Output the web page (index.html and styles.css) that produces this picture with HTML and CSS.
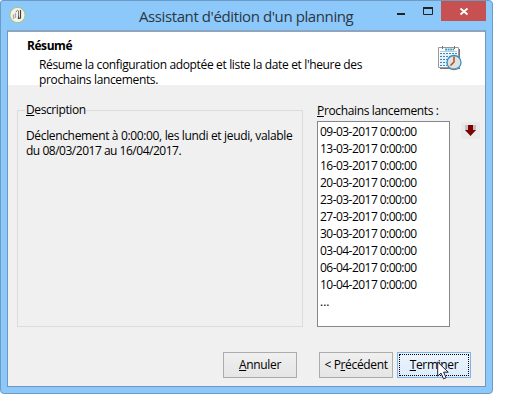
FILE: index.html
```html
<!DOCTYPE html>
<html lang="fr">
<head>
<meta charset="utf-8">
<title>Assistant d'édition d'un planning</title>
<link rel="stylesheet" href="styles.css">
</head>
<body>
<div class="window">
  <div class="titlebar">
    <svg class="app-icon" width="18" height="18" viewBox="0 0 18 18">
      <circle cx="8.500" cy="9" r="7.6" fill="#f4f4ee" stroke="#a9c46a" stroke-width="1"/>
      <path d="M4.500 13V8.500M6.500 12V7" stroke="#aaa9a0" stroke-width="1.3"/>
      <path d="M7 6c1-2 2-2 2.500-1v6" stroke="#77776f" fill="none"/>
      <path d="M11.500 4v8l-2 .5v-2" stroke="#44443f" stroke-width="1.2" fill="none"/>
    </svg>
    <h1 class="title">Assistant d'édition d'un planning</h1>
    <svg class="sys" width="60" height="20" viewBox="0 0 60 20">
      <path d="M17 13h8" stroke="#222" stroke-width="2"/>
      <path d="M43.500 6.500h9v7h-9z" stroke="#222" fill="none"/><path d="M43 7h10" stroke="#222" stroke-width="2"/>
    </svg>
    <div class="close"><svg width="45" height="20" viewBox="0 0 45 20"><path d="M19.5 7.500l7 6M26.5 7.500l-7 6" stroke="#fff" stroke-width="1.8"/></svg></div>
  </div>
  <main class="client">
    <header class="banner">
      <div class="banner-text">
        <h2>Résumé</h2>
        <p>Résume la configuration adoptée et liste la date et l'heure des<br>prochains lancements.</p>
      </div>
      <svg class="calendar" width="25" height="25" viewBox="0 0 25 25">
        <path d="M.5 1.5h20v20H.5z" fill="#fbfcfc" stroke="#999"/>
        <path d="M2 22.5h20M21.5 3v18" stroke="#777"/>
        <path d="M4.500 0v3M16.500 0v3" stroke="#777"/>
        <path d="M7 3.500h9" stroke="#429bc3" stroke-width="2" stroke-dasharray="2 .6"/>
        <path d="M2 5.500h17" stroke="#b8cbd7"/>
        <path d="M2 7.500h17M2 10.500h17M2 13.500h15M2 16.500h8M2 19.500h7" stroke="#3c86c4" stroke-dasharray="2 1"/>
        <path d="M2 9h17M2 12h17M2 15h9M2 18h7" stroke="#c4ddf2" stroke-width=".8"/>
        <circle cx="16" cy="16.500" r="7" fill="#e0e1e3" stroke="#3192c1" stroke-width="1.300"/>
        <path d="M11 21a7 7 0 0 0 9.500 0" fill="none" stroke="#8d9298"/>
        <path d="M16 10.500V16l-3.500 3.500" fill="none" stroke="#b84c19" stroke-width="1.500"/>
      </svg>
    </header>
    <div class="content">
      <fieldset class="description">
        <legend><u>D</u>escription</legend>
        <p>Déclenchement à 0:00:00, les lundi et jeudi, valable<br><span class="dates">du 08/03/2017 au 16/04/2017.</span></p>
      </fieldset>
      <section class="launches">
        <h3><u>P</u>rochains lancements :</h3>
        <ul>
          <li>09-03-2017 0:00:00</li>
          <li>13-03-2017 0:00:00</li>
          <li>16-03-2017 0:00:00</li>
          <li>20-03-2017 0:00:00</li>
          <li>23-03-2017 0:00:00</li>
          <li>27-03-2017 0:00:00</li>
          <li>30-03-2017 0:00:00</li>
          <li>03-04-2017 0:00:00</li>
          <li>06-04-2017 0:00:00</li>
          <li>10-04-2017 0:00:00</li>
          <li class="ellipsis">...</li>
        </ul>
      </section>
      <div class="more"><svg width="19" height="17" viewBox="0 0 19 17"><path d="M4 3h11v6H4z" fill="#c2c2c2"/><path d="M7 3h5v5h3l-5.500 6L4 8h3z" fill="#800000"/></svg></div>
    </div>
    <footer class="actions">
      <div class="btn cancel"><span><u>A</u>nnuler</span></div>
      <div class="btn prev"><span>&lt; P<u>r</u>écédent</span></div>
      <div class="btn finish"><span><u>T</u>erminer</span></div>
    </footer>
  </main>
  <svg class="cursor" width="12" height="19" viewBox="0 0 12 19"><path d="M.7 1v14.200l3.300-3.100 2.500 5.700 2.600-1.100-2.500-5.500h4.600z" fill="#fff" stroke="#1b1f38"/></svg>
</div>
</body>
</html>
```
FILE: styles.css
```css
* { box-sizing: border-box; margin: 0; padding: 0; }
body { background: #fff; font: 12px/15px "Open Sans", "Noto Sans", sans-serif; letter-spacing: -.35px; color: #000; }
u { text-decoration: underline; text-underline-offset: 1px; text-decoration-thickness: 1px; text-decoration-skip-ink: none; }
h1, h2, h3 { font-size: inherit; font-weight: 400; }
svg { display: block; }
.window { position: relative; width: 493px; height: 394px; background: #8dc8fa; border: 1px solid #6c9bc5; border-radius: 3px 4px 4px 4px; padding: 0 6px 6px; }
.titlebar { display: flex; height: 29px; align-items: flex-start; }
.app-icon { margin: 5px 0 0 2px; flex: none; }
.title { margin-left: 112px; width: 215px; padding-top: 4px; font-size: 15px; line-height: 22px; letter-spacing: -.4px; white-space: nowrap; color: #293743; flex: none; }
.sys { width: 60px; margin: 0 -22px 0 26px; flex: none; }
.close { margin-left: auto; width: 45px; height: 20px; background: #c75050; flex: none; }
.client { width: 479px; height: 357px; background: #f0f0f0; border: 1px solid #7198bb; border-top: 2px solid #8ca4bd; }
.banner { display: flex; justify-content: space-between; height: 53px; background: #fff; padding: 0 22px 0 19px; }
.banner-text { height: 53px; }
.banner h2 { margin-top: 6px; font-weight: 700; letter-spacing: -.45px; line-height: 16px; }
.banner p { margin: 3px 0 0 12px; white-space: nowrap; }
.calendar { margin-top: 14px; flex: none; }
.content { display: flex; height: 254px; padding: 17px 0 0 9px; }
.description { flex: none; min-width: 0; width: 286px; height: 225px; border: 1px solid #dcdcdc; padding: 10px 8px; }
.description legend { margin-left: -1px; padding: 0 0 0 1px; line-height: 16px; letter-spacing: -.4px; }
.description p { white-space: nowrap; }
.dates { letter-spacing: -.48px; }
.launches { flex: none; margin-left: 14px; width: 133px; }
.launches h3 { height: 19px; line-height: 18px; white-space: nowrap; }
.launches ul { list-style: none; height: 206px; border: 1px solid #828790; background: #fff; padding: 1px 2px; }
.launches li { height: 17px; line-height: 17px; letter-spacing: -.54px; white-space: nowrap; }
.launches .ellipsis { letter-spacing: 0; }
.more { flex: none; margin: 20px 0 0 11px; width: 19px; height: 17px; background: #e9e9e9; }
.actions { display: flex; padding: 13px 0 0 215px; }
.btn { width: 74px; height: 26px; border: 1px solid #acacac; background: linear-gradient(#f0f0f0, #e5e5e5); text-align: center; line-height: 24px; white-space: nowrap; }
.prev { margin-left: 22px; }
.finish { margin-left: 4px; border-color: #7eb4ea; background: linear-gradient(#ecf4fc, #dcecfc); padding: 1px; line-height: 20px; }
.finish span { display: block; border: 1px dotted #000; height: 22px; }
.cursor { position: absolute; left: 436px; top: 360px; }
```
